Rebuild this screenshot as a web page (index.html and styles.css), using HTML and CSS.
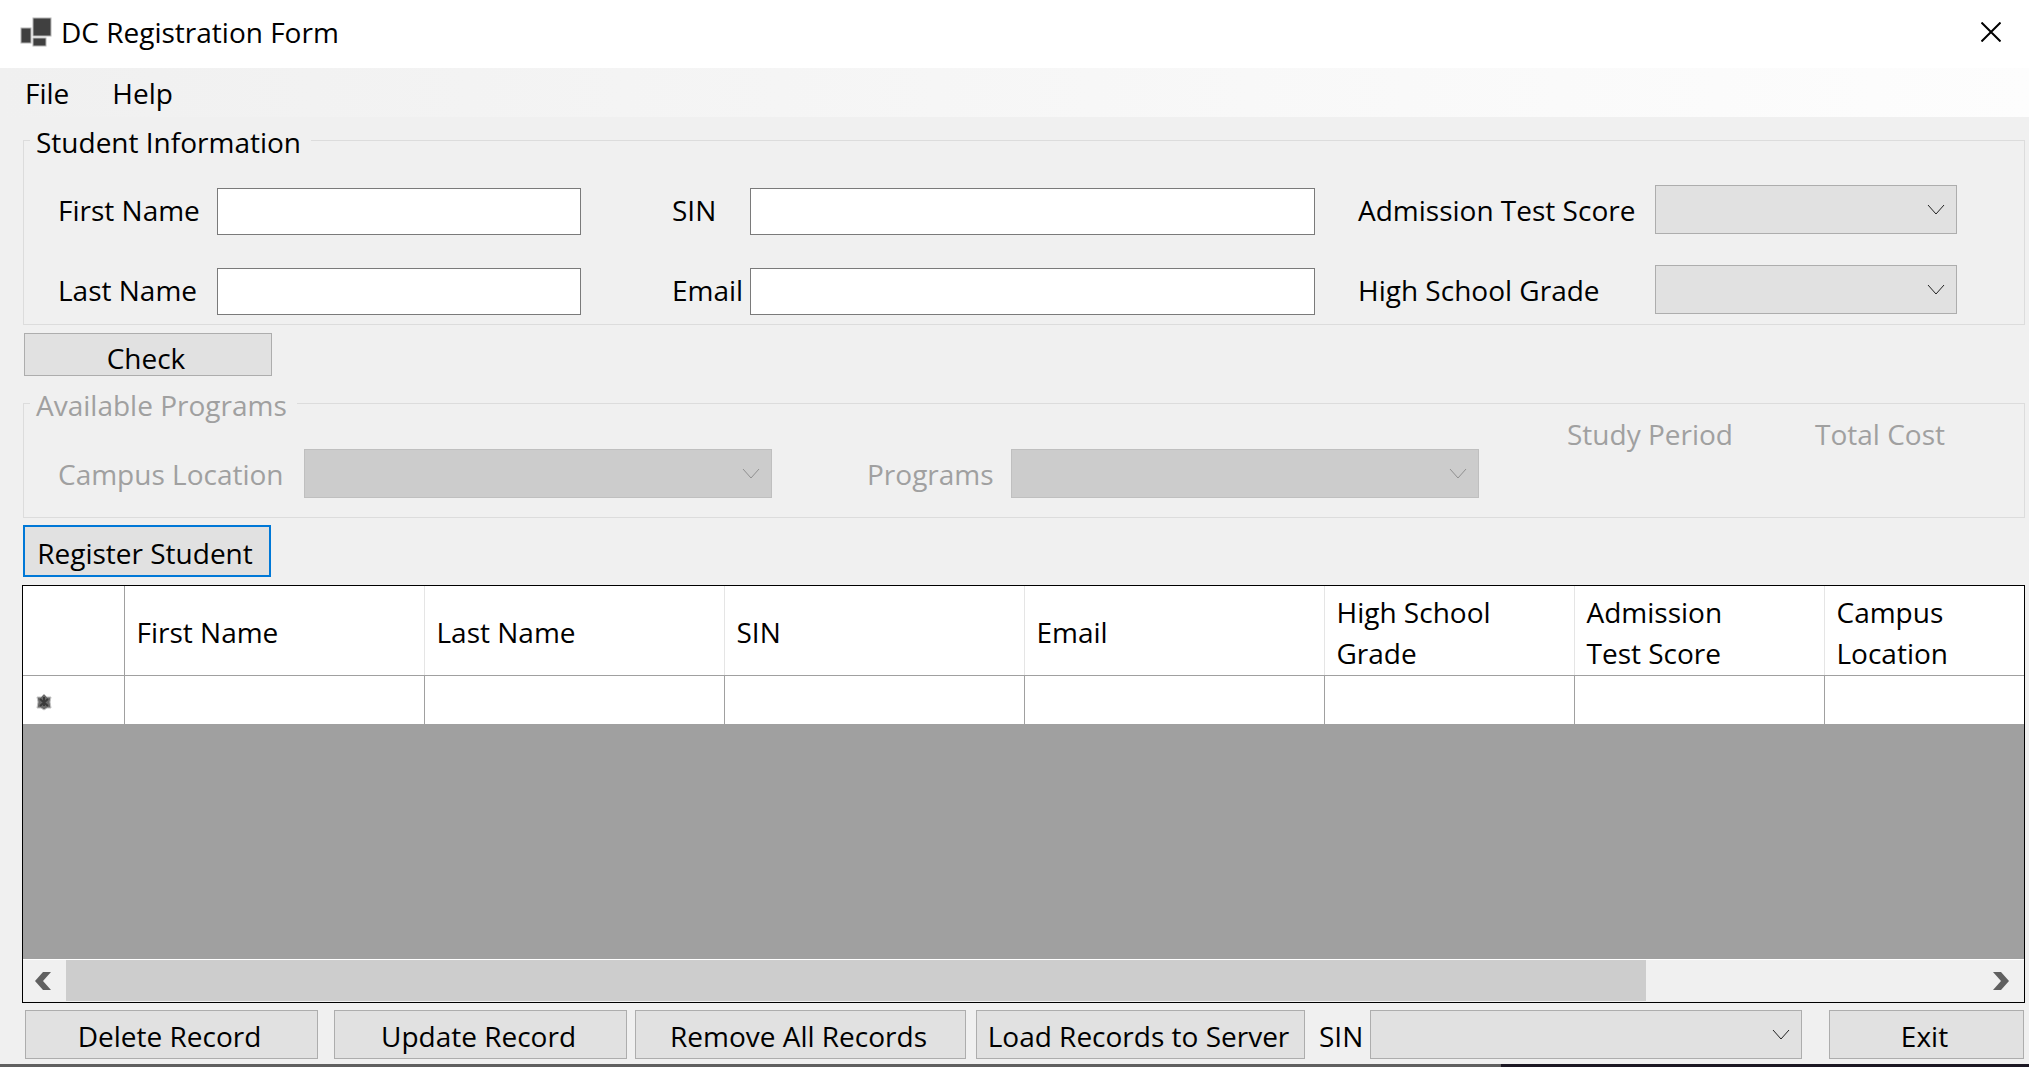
FILE: index.html
```html
<!DOCTYPE html>
<html lang="en">
<head>
<meta charset="utf-8">
<title>DC Registration Form</title>
<link rel="stylesheet" href="styles.css">
</head>
<body>
<div class="window">
  <header class="titlebar">
    <svg class="app-icon" width="32" height="30" viewBox="0 0 32 30" aria-hidden="true">
      <g fill="#404040" stroke="#b4b4b4"><rect x="13" y="1" width="18" height="18"/><rect x="1" y="11" width="10" height="15"/><rect x="13" y="21" width="13" height="8"/></g>
    </svg>
    <h1 class="title">DC Registration Form</h1>
    <button class="close" type="button" aria-label="Close">
      <svg width="20" height="20" viewBox="0 0 20 20"><path d="M0.500 0.500L19.500 19.500M19.500 0.500L0.500 19.500" stroke="#000" stroke-width="2" fill="none"/></svg>
    </button>
  </header>

  <nav class="menubar">
    <button type="button" class="menu-item">File</button>
    <button type="button" class="menu-item">Help</button>
  </nav>

  <main class="content">
    <fieldset class="group student">
      <legend>Student Information</legend>
      <div class="student-grid">
        <label for="first">First Name</label><input id="first" type="text">
        <label class="contact" for="sin">SIN</label><input id="sin" type="text">
        <label class="result" for="score">Admission Test Score</label><select id="score" class="combo"></select>
        <label for="last">Last Name</label><input id="last" type="text">
        <label class="contact" for="email">Email</label><input id="email" type="text">
        <label class="result" for="grade">High School Grade</label><select id="grade" class="combo"></select>
      </div>
    </fieldset>

    <button type="button" class="btn check">Check</button>

    <fieldset class="group programs" disabled>
      <legend>Available Programs</legend>
      <div class="programs-grid">
        <label for="campus">Campus Location</label><select id="campus" class="combo"></select>
        <label class="program" for="program">Programs</label><select id="program" class="combo"></select>
        <span class="caption period">Study Period</span>
        <span class="caption">Total Cost</span>
      </div>
    </fieldset>

    <button type="button" class="btn register">Register Student</button>

    <section class="grid-view">
      <table class="records">
        <colgroup>
          <col class="c-head"><col class="c-wide"><col class="c-wide"><col class="c-wide"><col class="c-wide"><col class="c-mid"><col class="c-mid"><col>
        </colgroup>
        <thead>
          <tr><th></th><th>First Name</th><th>Last Name</th><th>SIN</th><th>Email</th><th>High School<br>Grade</th><th>Admission<br>Test Score</th><th>Campus<br>Location</th></tr>
        </thead>
        <tbody>
          <tr>
            <td class="marker"><svg width="16" height="18" viewBox="0 0 16 18" aria-hidden="true"><path d="M8 1L11 4L15 4L14 9L15 15L11 15L8 17L5 15L1 15L2 9L1 4L5 4Z" fill="#6a6a6a" stroke="#c4c4c4"/><path d="M8 4V13M4 6L12 13M12 6L4 13" stroke="#3a3a3a" stroke-width="2"/></svg></td>
            <td></td><td></td><td></td><td></td><td></td><td></td><td></td>
          </tr>
        </tbody>
      </table>
      <div class="scrollbar">
        <button type="button" class="scroll-btn" aria-label="Scroll left"><svg width="16" height="18" viewBox="0 0 16 18"><path d="M8 0H16L8 9L16 18H8L0 9Z" fill="#606060"/></svg></button>
        <div class="track"><div class="thumb"></div></div>
        <button type="button" class="scroll-btn" aria-label="Scroll right"><svg width="16" height="18" viewBox="0 0 16 18"><path d="M8 0H0L8 9L0 18H8L16 9Z" fill="#606060"/></svg></button>
      </div>
    </section>

    <div class="actions">
      <button type="button" class="btn delete">Delete Record</button>
      <button type="button" class="btn update">Update Record</button>
      <button type="button" class="btn remove">Remove All Records</button>
      <button type="button" class="btn load">Load Records to Server</button>
      <label for="record">SIN</label>
      <select id="record" class="combo"></select>
      <button type="button" class="btn exit">Exit</button>
    </div>
  </main>
  <footer class="edge"></footer>
</div>
</body>
</html>
```

FILE: styles.css
```css
* { box-sizing: border-box; }

body {
  margin: 0;
  background: #f0f0f0;
  color: #000;
  font: 28px/41px "Open Sans", "Segoe UI", sans-serif;
}

button, input, select { font: inherit; color: inherit; border-radius: 0; margin: 0; }

.window { display: flex; flex-direction: column; min-height: 100vh; }

.titlebar {
  display: flex;
  align-items: center;
  height: 68px;
  padding: 0 28px 4px 20px;
  background: #fff;
}
.app-icon { flex: none; }
.title { flex: 1; margin: 0 0 0 9px; font-size: 28px; font-weight: 400; }
.close { display: flex; padding: 0; border: 0; background: none; }

.menubar {
  display: flex;
  gap: 43px;
  height: 49px;
  padding: 0 25px;
  background: linear-gradient(90deg, #f0f0f0, #fdfdfd);
}
.menu-item { padding: 2px 0 0; border: 0; background: none; }

.content { flex: 1; display: flex; flex-direction: column; padding: 6px 4px 5px 22px; }

.group {
  min-width: 0;
  margin: 0 0 0 1px;
  padding: 0;
  border: 1px solid #dcdcdc;
}
.group legend { margin-left: 6px; padding: 0 10px 0 6px; height: 35px; line-height: 38px; }
.student { height: 202px; }
.programs { height: 132px; margin-top: 10px; color: #a0a0a0; }

input {
  width: 100%;
  height: 47px;
  padding: 0 8px;
  border: 1px solid #7a7a7a;
  background: #fff;
}

.student-grid {
  display: grid;
  grid-template-columns: 159px 364fr 169px 565fr 340px 302fr;
  grid-template-rows: 49px 49px;
  row-gap: 31px;
  align-items: center;
  padding: 27px 67px 0 34px;
}
.student-grid label { padding-top: 2px; }
.student-grid input { margin-top: 3px; }
.contact { padding-left: 91px; }
.result { padding-left: 43px; }

.combo {
  appearance: none;
  width: 100%;
  height: 49px;
  border: 1px solid #adadad;
  background: #e1e1e1 url("data:image/svg+xml,%3Csvg xmlns='http://www.w3.org/2000/svg' width='18' height='12'%3E%3Cpath d='M1 1L9 10L17 1' fill='none' stroke='%23222'/%3E%3C/svg%3E") no-repeat right 11px center;
  opacity: 1;
}
.combo:disabled {
  border-color: #bfbfbf;
  background-color: #ccc;
  background-image: url("data:image/svg+xml,%3Csvg xmlns='http://www.w3.org/2000/svg' width='18' height='12'%3E%3Cpath d='M1 1L9 10L17 1' fill='none' stroke='%23909090'/%3E%3C/svg%3E");
}

.btn {
  display: flex;
  justify-content: center;
  align-items: center;
  padding: 4px 4px 0 0;
  border: 1px solid #adadad;
  background: #e1e1e1;
  white-space: nowrap;
}
.check { width: 248px; height: 43px; margin: 8px 0 0 2px; padding-top: 8px; }
.register { width: 248px; height: 52px; margin: 7px 0 0 1px; border: 2px solid #0078d7; }

.programs-grid {
  display: grid;
  grid-template-columns: 246px 468fr 239px 468fr 336px 142px;
  grid-template-rows: 77px;
  align-items: end;
  padding: 0 67px 0 34px;
}
.programs-grid label { line-height: 47px; }
.program { padding-left: 95px; }
.caption { align-self: start; line-height: 26px; }
.period { padding-left: 88px; }

.grid-view {
  flex: 1;
  display: flex;
  flex-direction: column;
  margin-top: 8px;
  border: 1px solid #000;
  background: #a0a0a0;
}
.records { width: 100%; table-layout: fixed; border-collapse: collapse; background: #fff; }
.c-head { width: 101px; }
.c-wide { width: 300px; }
.c-mid { width: 250px; }
.records th {
  height: 89px;
  padding: 5px 11px 0 12px;
  border-right: 1px solid #e5e5e5;
  border-bottom: 1px solid #a0a0a0;
  font-weight: 400;
  text-align: left;
}
.records td { height: 49px; padding: 0; border-right: 1px solid #a0a0a0; }
.records th:first-child { border-right-color: #a0a0a0; }
.records th:last-child, .records td:last-child { border-right: 0; }
.records .marker { padding: 5px 0 0 13px; }
.marker svg { display: block; }

.scrollbar { display: flex; height: 43px; margin-top: auto; border-top: 1px solid #fff; background: #f0f0f0; }
.scroll-btn { display: flex; align-items: center; width: 43px; padding: 0 0 0 12px; border: 0; background: none; }
.track { flex: 1; padding-bottom: 1px; }
.thumb { width: 82.5%; height: 100%; background: #cdcdcd; }

.actions {
  display: grid;
  grid-template-columns: 309fr 301fr 341fr 343fr 51px 432fr 222fr;
  align-items: center;
  margin-top: 7px;
  padding: 0 1px 0 3px;
}
.actions label { padding-top: 4px; }
.actions .btn { height: 49px; }
.actions .delete { margin-right: 16px; }
.actions .update { margin-right: 8px; }
.actions .remove { margin-right: 10px; }
.actions .load { margin-right: 14px; }
.actions .exit { margin-left: 27px; }

.edge { height: 3px; background: linear-gradient(90deg, #606060 74%, #1b1823 74%); }
```
